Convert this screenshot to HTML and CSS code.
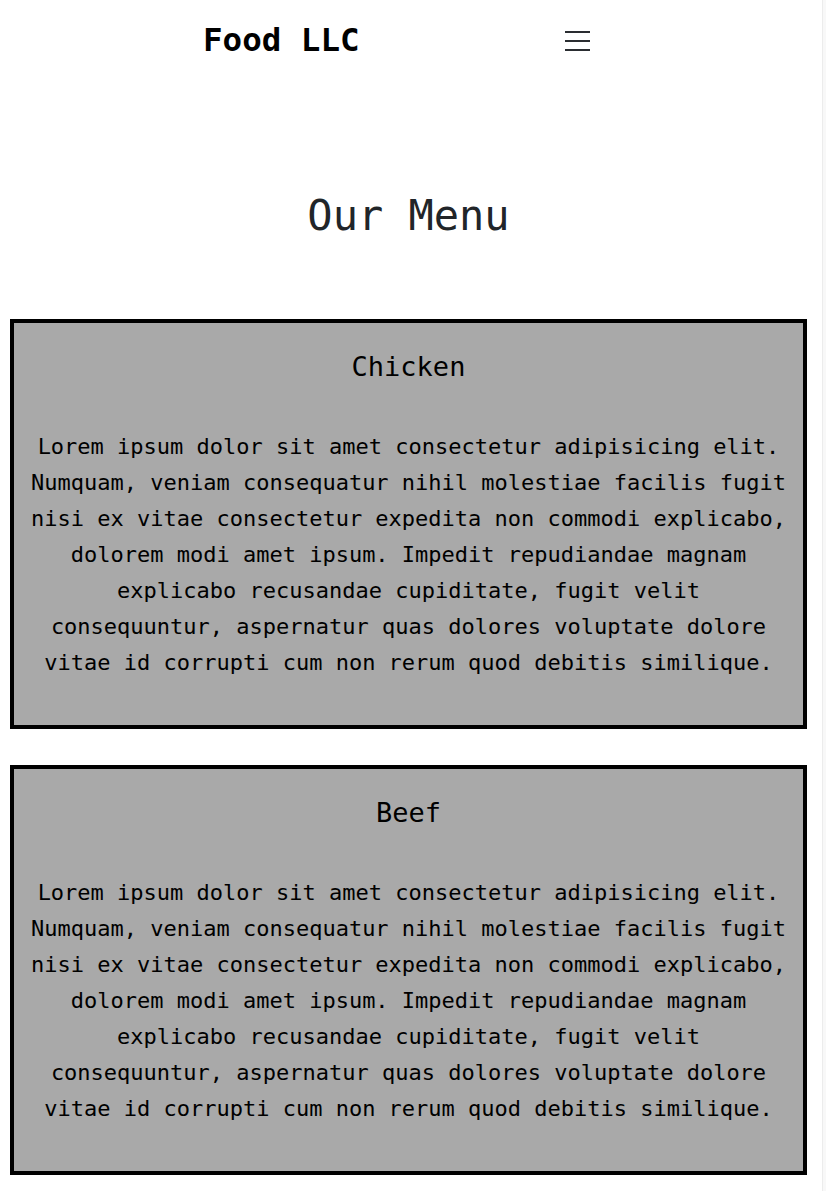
FILE: index.html
```html
<!DOCTYPE html>
<html lang="en">
<head>
<meta charset="utf-8">
<title>Food LLC</title>
<link rel="stylesheet" href="styles.css">
</head>
<body>
<header class="header">
  <div class="logo">Food LLC</div>
  <button class="burger" aria-label="Menu">
    <svg width="25" height="22" viewBox="0 0 25 22"><path d="M0 1h25M0 10h25M0 19h25" stroke="#2a2d31" stroke-width="2" fill="none"/></svg>
  </button>
</header>
<main class="main">
  <h1 class="title">Our Menu</h1>
  <div class="cards">
    <section class="card">
      <h2 class="card-title">Chicken</h2>
      <p class="card-text">Lorem ipsum dolor sit amet consectetur adipisicing elit. Numquam, veniam consequatur nihil molestiae facilis fugit nisi ex vitae consectetur expedita non commodi explicabo, dolorem modi amet ipsum. Impedit repudiandae magnam explicabo recusandae cupiditate, fugit velit consequuntur, aspernatur quas dolores voluptate dolore vitae id corrupti cum non rerum quod debitis similique.</p>
    </section>
    <section class="card">
      <h2 class="card-title">Beef</h2>
      <p class="card-text">Lorem ipsum dolor sit amet consectetur adipisicing elit. Numquam, veniam consequatur nihil molestiae facilis fugit nisi ex vitae consectetur expedita non commodi explicabo, dolorem modi amet ipsum. Impedit repudiandae magnam explicabo recusandae cupiditate, fugit velit consequuntur, aspernatur quas dolores voluptate dolore vitae id corrupti cum non rerum quod debitis similique.</p>
    </section>
  </div>
</main>
<div class="scroll-track"></div>
</body>
</html>
```

FILE: styles.css
```css
html, body {
  margin: 0;
  padding: 0;
  background: #fff;
}
body {
  font-family: "DejaVu Sans Mono", "Liberation Mono", monospace;
  color: #000;
  overflow: hidden;
}
.header {
  height: 80px;
  display: flex;
  align-items: center;
  padding-left: 203px;
  gap: 205px;
}
.logo {
  font-size: 32.5px;
  font-weight: bold;
  color: #000;
  line-height: 40px;
}
.burger {
  border: 0;
  background: none;
  padding: 0;
  margin-top: 3px;
  display: flex;
}
.main {
  padding: 0 19px 16px 10px;
}
.title {
  margin: 111px 0 78px;
  font-size: 42px;
  font-weight: normal;
  line-height: 50px;
  text-align: center;
  color: #212529;
}
.cards {
  display: flex;
  flex-direction: column;
  gap: 36px;
}
.card {
  border: 4px solid #000;
  background: #a9a9a9;
  padding: 26px 14px 44px;
  text-align: center;
}
.card-title {
  margin: 0 0 44px;
  font-size: 27px;
  font-weight: normal;
  line-height: 36px;
}
.card-text {
  margin: 0;
  font-size: 22px;
  line-height: 36px;
}
.scroll-track {
  position: fixed;
  top: 0;
  right: 0;
  bottom: 0;
  width: 3px;
  background: #f8f8f8;
  border-left: 1px solid #ececec;
}
```
